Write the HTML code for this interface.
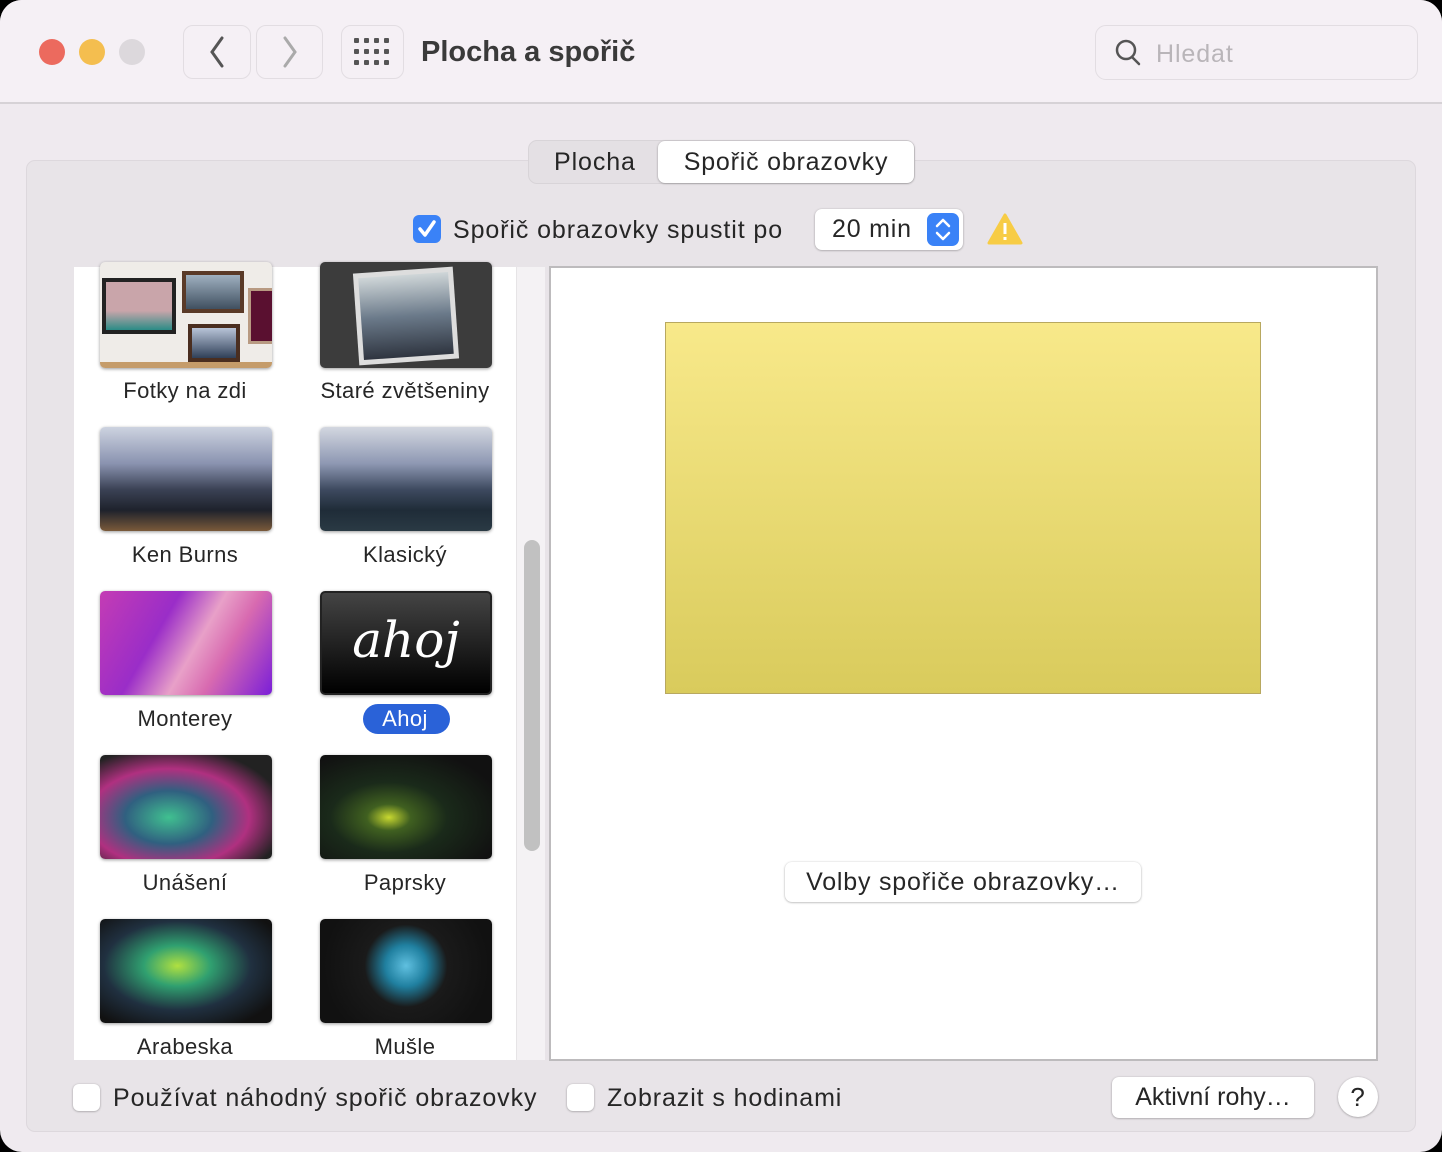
<!DOCTYPE html>
<html><head><meta charset="utf-8"><style>
*{box-sizing:border-box;margin:0;padding:0}
body{width:1442px;height:1152px;background:#000;font-family:"Liberation Sans",sans-serif;color:#262626;position:relative;overflow:hidden}
.win{position:absolute;left:0;top:0;width:1442px;height:1152px;background:#efeaef;border-radius:22px;overflow:hidden}
.tb{position:absolute;left:0;top:0;width:1442px;height:104px;background:#f5f0f5;border-bottom:2px solid #d6d2d6}
.a{position:absolute}
.t25{font-size:25px;letter-spacing:0.9px}
.dot{position:absolute;width:26px;height:26px;border-radius:50%;top:39px}
.btn{position:absolute;border:1.5px solid #e2dde2;border-radius:10px;background:#f5f0f5}
.box{position:absolute;left:26px;top:160px;width:1390px;height:972px;background:#e8e4e8;border:1px solid #ddd8dd;border-radius:9px}
.lbl{position:absolute;font-size:22px;text-align:center;width:220px;letter-spacing:0.4px}
.th{position:absolute;width:172px;height:104px;border-radius:5px;box-shadow:0 1px 3px rgba(0,0,0,.4);overflow:hidden}
.pb{position:absolute;background:#fff;border-radius:7px;box-shadow:0 0.5px 2px rgba(0,0,0,.35);font-size:25px;text-align:center;letter-spacing:0.8px}
.cb{position:absolute;width:27px;height:27px;border-radius:6px;background:#fff;box-shadow:0 0.5px 2px rgba(0,0,0,.35)}
</style></head><body>
<div class="win">
<div class="tb">
 <div class="dot" style="left:39px;background:#ec6a5e"></div>
 <div class="dot" style="left:79px;background:#f4be4f"></div>
 <div class="dot" style="left:119px;background:#dcd8dc"></div>
 <div class="btn" style="left:183px;top:25px;width:68px;height:54px"></div>
 <div class="btn" style="left:256px;top:25px;width:67px;height:54px"></div>
 <svg class="a" style="left:200px;top:30px" width="40" height="44"><path d="M22 8 L12 22 L22 36" stroke="#555" stroke-width="3" fill="none" stroke-linecap="round"/></svg>
 <svg class="a" style="left:273px;top:30px" width="40" height="44"><path d="M12 8 L22 22 L12 36" stroke="#aaa" stroke-width="3" fill="none" stroke-linecap="round"/></svg>
 <div class="btn" style="left:341px;top:25px;width:63px;height:54px"></div>
 <svg class="a" style="left:354px;top:38px" width="38" height="28" fill="#555">
  <rect x="0" y="0" width="5" height="5" rx="1"/><rect x="10" y="0" width="5" height="5" rx="1"/><rect x="20" y="0" width="5" height="5" rx="1"/><rect x="30" y="0" width="5" height="5" rx="1"/>
  <rect x="0" y="11" width="5" height="5" rx="1"/><rect x="10" y="11" width="5" height="5" rx="1"/><rect x="20" y="11" width="5" height="5" rx="1"/><rect x="30" y="11" width="5" height="5" rx="1"/>
  <rect x="0" y="22" width="5" height="5" rx="1"/><rect x="10" y="22" width="5" height="5" rx="1"/><rect x="20" y="22" width="5" height="5" rx="1"/><rect x="30" y="22" width="5" height="5" rx="1"/></svg>
 <div class="a" style="left:421px;top:36px;font-size:29px;font-weight:bold;color:#3a3a3a">Plocha a spořič</div>
 <div class="btn" style="left:1095px;top:25px;width:323px;height:55px;border-radius:11px"></div>
 <svg class="a" style="left:1113px;top:38px" width="30" height="30"><circle cx="13" cy="12" r="9" stroke="#555" stroke-width="2.5" fill="none"/><path d="M19 19 L26 26" stroke="#555" stroke-width="2.5" stroke-linecap="round"/></svg>
 <div class="a t25" style="left:1156px;top:40px;color:#b9b5b9">Hledat</div>
</div>

<div class="box"></div>
<div class="a" style="left:528px;top:140px;width:387px;height:44px;background:#e4e0e4;border:1px solid #d8d4d8;border-radius:9px"></div>
<div class="a t25" style="left:554px;top:148px">Plocha</div>
<div class="pb" style="left:658px;top:141px;width:256px;height:42px;line-height:42px">Spořič obrazovky</div>

<div class="a" style="left:413px;top:215px;width:28px;height:28px;border-radius:6px;background:#3a82f7"></div>
<svg class="a" style="left:413px;top:215px" width="28" height="28"><path d="M7 14 L12 20 L21 7" stroke="#fff" stroke-width="3.5" fill="none" stroke-linecap="round" stroke-linejoin="round"/></svg>
<div class="a t25" style="left:453px;top:216px">Spořič obrazovky spustit po</div>
<div class="pb" style="left:815px;top:209px;width:148px;height:41px;text-align:left;padding-left:17px;line-height:41px">20 min</div>
<div class="a" style="left:927px;top:213px;width:32px;height:33px;border-radius:7px;background:#3a82f7"></div>
<svg class="a" style="left:927px;top:213px" width="32" height="33"><path d="M10 13 L16 7 L22 13 M10 20 L16 26 L22 20" stroke="#fff" stroke-width="2.5" fill="none" stroke-linecap="round" stroke-linejoin="round"/></svg>
<svg class="a" style="left:986px;top:212px" width="38" height="34"><path d="M19 3 L35 31 L3 31 Z" fill="#f7cc45" stroke="#f7cc45" stroke-width="3" stroke-linejoin="round"/><rect x="17.5" y="11" width="3" height="11" fill="#fff"/><rect x="17.5" y="25" width="3" height="3" fill="#fff"/></svg>

<div class="a" style="left:74px;top:267px;width:442px;height:793px;background:#fff"></div>
<div class="a" style="left:516px;top:267px;width:29px;height:793px;background:#f4f2f4;border-left:1px solid #e6e4e6"></div>
<div class="a" style="left:524px;top:540px;width:16px;height:311px;border-radius:8px;background:#c1c1c1"></div>

<div class="th" style="left:100px;top:262px;height:106px;background:#efece8">
 <div class="a" style="left:2px;top:16px;width:74px;height:56px;background:#222;padding:4px"><div style="width:100%;height:100%;background:linear-gradient(#c9a5aa,#c9a5aa 60%,#2a8c86)"></div></div>
 <div class="a" style="left:82px;top:9px;width:62px;height:42px;background:#5a3a28;padding:4px"><div style="width:100%;height:100%;background:linear-gradient(#9fb0c0,#405060)"></div></div>
 <div class="a" style="left:88px;top:62px;width:52px;height:38px;background:#4a2e20;padding:4px"><div style="width:100%;height:100%;background:linear-gradient(#b8c4d8,#304058)"></div></div>
 <div class="a" style="left:148px;top:26px;width:30px;height:56px;background:#b89a82;padding:3px"><div style="width:100%;height:100%;background:#5a1030"></div></div>
 <div class="a" style="left:0;top:100px;width:172px;height:6px;background:#c59c6a"></div>
</div>
<div class="th" style="left:320px;top:262px;height:106px;background:#3c3c3c">
 <div class="a" style="left:36px;top:8px;width:100px;height:92px;background:#ddd;padding:5px;transform:rotate(-4deg)"><div style="width:100%;height:100%;background:linear-gradient(#cfd6d8,#6b7a8a 50%,#2f3540)"></div></div>
</div>
<div class="th" style="left:100px;top:427px;background:linear-gradient(#cdd3e0,#8a93b0 35%,#3b4255 60%,#1e222c 80%,#7a5a3a)"></div>
<div class="th" style="left:320px;top:427px;background:linear-gradient(#d3d7e0,#8e98b3 35%,#3e4a60 60%,#1f2c38 80%,#2a3a44)"></div>
<div class="th" style="left:100px;top:591px;background:linear-gradient(120deg,#c43cb4,#9a2dc8 35%,#e8a0c8 55%,#d86ab0 70%,#7a1ed8)"></div>
<div class="th" style="left:320px;top:591px;background:linear-gradient(#444,#000);border:2px solid #222">
 <div style="font-family:'DejaVu Serif',serif;font-style:italic;color:#fff;font-size:50px;text-align:center;margin-top:18px">ahoj</div></div>
<div class="th" style="left:100px;top:755px;background:radial-gradient(ellipse at 40% 60%,#40c090,#306080 30%,#b03080 55%,#222 80%)"></div>
<div class="th" style="left:320px;top:755px;background:radial-gradient(ellipse at 40% 60%,#c8d830 0,#406020 15%,#1a2a1a 40%,#111 80%)"></div>
<div class="th" style="left:100px;top:919px;background:radial-gradient(ellipse at 45% 45%,#b0e040 0,#30a070 25%,#203040 55%,#111 85%)"></div>
<div class="th" style="left:320px;top:919px;background:radial-gradient(circle at 50% 45%,#60c0e0 0,#2080a0 20%,#1a1a1a 40%,#111 80%)"></div>

<div class="lbl" style="left:75px;top:378px">Fotky na zdi</div>
<div class="lbl" style="left:295px;top:378px">Staré zvětšeniny</div>
<div class="lbl" style="left:75px;top:542px">Ken Burns</div>
<div class="lbl" style="left:295px;top:542px">Klasický</div>
<div class="lbl" style="left:75px;top:706px">Monterey</div>
<div class="a" style="left:363px;top:704px;width:87px;height:30px;border-radius:15px;background:#2a62d8"></div>
<div class="lbl" style="left:295px;top:706px;color:#fff">Ahoj</div>
<div class="lbl" style="left:75px;top:870px">Unášení</div>
<div class="lbl" style="left:295px;top:870px">Paprsky</div>
<div class="lbl" style="left:75px;top:1034px">Arabeska</div>
<div class="lbl" style="left:295px;top:1034px">Mušle</div>

<div class="a" style="left:549px;top:266px;width:829px;height:795px;background:#fff;border:2px solid #bdbbbd"></div>
<div class="a" style="left:665px;top:322px;width:596px;height:372px;border:1px solid #b8a860;background:linear-gradient(#f8e98a,#d9cb5c)"></div>
<div class="pb" style="left:785px;top:862px;width:356px;height:40px;line-height:40px">Volby spořiče obrazovky…</div>

<div class="cb" style="left:73px;top:1084px"></div>
<div class="a t25" style="left:113px;top:1084px">Používat náhodný spořič obrazovky</div>
<div class="cb" style="left:567px;top:1084px"></div>
<div class="a t25" style="left:607px;top:1084px">Zobrazit s hodinami</div>
<div class="pb" style="left:1112px;top:1077px;width:202px;height:41px;line-height:41px;letter-spacing:0">Aktivní rohy…</div>
<div class="pb" style="left:1338px;top:1077px;width:40px;height:40px;border-radius:50%;line-height:40px;font-size:26px">?</div>
</div>
</body></html>
